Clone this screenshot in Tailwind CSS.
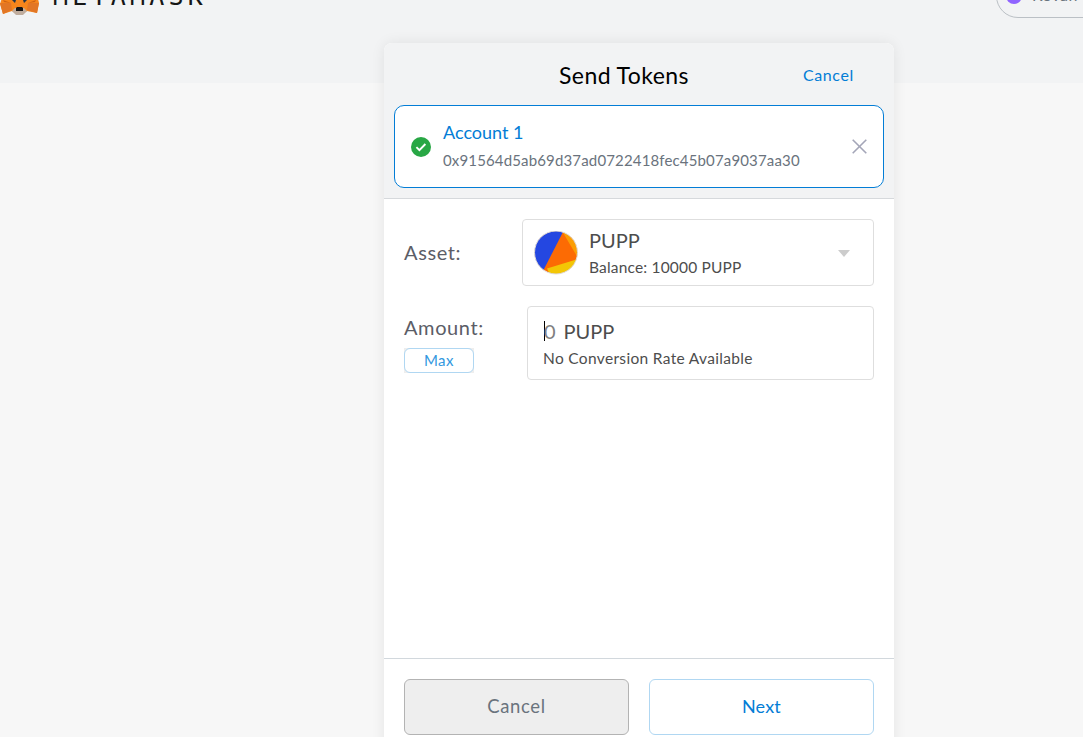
<!DOCTYPE html>
<html lang="en">
<head>
<meta charset="utf-8">
<title>Send Tokens</title>
<script src="https://cdn.jsdelivr.net/npm/@tailwindcss/browser@4"></script>
</head>
<body class="h-[737px] overflow-hidden bg-[#f7f7f7] font-[Lato,sans-serif] text-[#4d4d4d]">
<header class="flex h-[83px] justify-between overflow-hidden bg-[#f2f3f4]">
  <div class="-mt-[24px] flex h-[40px]">
    <svg class="mt-[2px] h-[37px] w-[40px]" viewBox="0 0 40 37">
      <path d="M1 0 16 10h8L38 0l-1 17 2 8-2 10-10-2-4 3h-7l-4-3-9 3L0 26l3-9z" fill="#f6851b"/>
      <path d="M0 25h11l1 7-9 4zM39 25H28l-1 7 10 3z" fill="#e27625"/>
      <path d="m3 22 8 3-7-1zM36 22l-8 3 7-1z" fill="#cd6116"/>
      <path d="m12 33 4 4h7l4-4-3-3h-9z" fill="#c0ad9e"/>
      <path d="m16 30 1-1h5l1 1v3h-7z" fill="#161616"/>
      <path d="m11 21 5 1-1 3zM28 21l-5 1 1 3z" fill="#233447"/>
    </svg>
    <div class="ml-[13px] mt-[6px] font-['DejaVu_Sans_Mono',monospace] text-[25px] leading-[30px] tracking-[4.2px] whitespace-nowrap text-[#161616]">METAMASK</div>
  </div>
  <div class="-mt-[26px] -mr-[60px] flex h-[44px] w-[147px] items-center rounded-full border border-[#bbc0c5] pl-[9px] text-[16px] text-[#6a737d]">
    <span class="mr-[10px] size-[16px] shrink-0 rounded-full bg-[#9064ff]"></span><span class="-mt-[2px] whitespace-nowrap tracking-[.4px]">Kovan Test Network</span>
  </div>
</header>
<main class="relative -mt-[40px] ml-[384px] flex h-[713px] w-[510px] flex-col overflow-hidden rounded-t-lg bg-white shadow-[0_0_14px_rgba(0,0,0,0.08)]">
  <section class="h-[156px] shrink-0 border-b border-[#d6d9dc] bg-[#f2f3f4] px-[10px]">
    <div class="flex h-[62px] items-center pt-[3px]">
      <h1 class="ml-[165px] w-[244px] whitespace-nowrap text-[23px] tracking-[.42px] text-black">Send Tokens</h1>
      <a class="-mt-[2px] whitespace-nowrap text-[16px] tracking-[.6px] text-[#037dd6]">Cancel</a>
    </div>
    <div class="flex h-[83px] items-center rounded-[10px] border border-[#037dd6] bg-white px-4">
      <svg class="size-5" viewBox="0 0 20 20"><circle cx="10" cy="10" r="10" fill="#28a745"/><path d="m5.4 10.2 3 3 6-6.2" fill="none" stroke="white" stroke-width="1.9"/></svg>
      <div class="-mt-[2px] ml-3 flex-1 whitespace-nowrap">
        <div class="text-[18px] leading-7 text-[#037dd6]"><span>Account 1</span></div>
        <div class="text-[15px] leading-7 tracking-[.15px] text-[#6a737d]"><span>0x91564d5ab69d37ad0722418fec45b07a9037aa30</span></div>
      </div>
      <svg class="size-[15px]" viewBox="0 0 15 15"><path d="m.7.7 13.6 13.6m0-13.6L.7 14.3" stroke="#a4a6b8" stroke-width="1.6"/></svg>
    </div>
  </section>
  <section class="flex h-[459px] shrink-0 flex-col gap-5 px-5 pt-5">
    <div class="flex items-center justify-between">
      <label class="-mt-[2px] text-[20px] tracking-[.6px] text-[#5b5d67]">Asset:</label>
      <div class="flex h-[67px] w-[352px] items-center rounded border border-[#dedede] pl-[11px] pr-[23px]">
        <svg class="size-11" viewBox="0 0 44 44"><defs><clipPath id="token"><circle cx="22" cy="21.5" r="21.5"/></clipPath></defs><g clip-path="url(#token)"><path fill="#fc6b04" d="M0 0h44v44H0z"/><path fill="#2447e1" d="M0 0h29.5L8 42H0z"/><path fill="#fb9e04" d="m28 0 16 27V0z"/><path fill="#f3c605" d="m13 37.5 31-9.500v16H16z"/></g><circle cx="22" cy="21.5" r="21.5" fill="none" stroke="#dedede"/></svg>
        <div class="ml-[11px] mt-[2px] flex-1 whitespace-nowrap">
          <div class="text-[20px] leading-[26px]"><span>PUPP</span></div>
          <div class="text-[15.5px] leading-[28px] tracking-[.18px]"><span>Balance: 10000 PUPP</span></div>
        </div>
        <svg class="mt-[2px] h-[7px] w-3" viewBox="0 0 12 7"><path d="M0 0h12L6 7z" fill="#ccc"/></svg>
      </div>
    </div>
    <div class="flex justify-between">
      <div class="w-[82px] pt-[7px]">
        <label class="block h-[35px] text-[20px] leading-7 tracking-[.6px] text-[#5b5d67]"><span>Amount:</span></label>
        <div class="flex w-[70px] bg-[#eee]"><button class="h-[25px] w-[70px] rounded-[6px] border border-[#b0d7f2] bg-white text-[15px] leading-none tracking-[.5px] text-[#3398e0]"><span>Max</span></button></div>
      </div>
      <div class="h-[74px] w-[347px] whitespace-nowrap rounded border border-[#dedede] pl-[16px] pt-[10px]">
        <div class="flex h-[27px] items-center text-[20px]"><span class="mr-2 flex h-5 items-center border-l border-black text-[#808080]"><span class="-ml-px">0</span></span><span>PUPP</span></div>
        <div class="-ml-px text-[15.5px] leading-[28px] tracking-[.33px]"><span>No Conversion Rate Available</span></div>
      </div>
    </div>
  </section>
  <footer class="flex shrink-0 gap-5 border-t border-[#d2d8dd] px-5 pt-5">
    <button class="h-14 flex-1 rounded-[6px] border border-[#b3b3b3] bg-[#eee] text-[18.5px] tracking-[.65px] text-[#6a737d]"><span>Cancel</span></button>
    <button class="h-14 flex-1 rounded-[6px] border border-[#b0d7f2] bg-white pb-[2px] text-[18px] tracking-[.2px] text-[#037dd6]"><span>Next</span></button>
  </footer>
</main>
</body>
</html>
